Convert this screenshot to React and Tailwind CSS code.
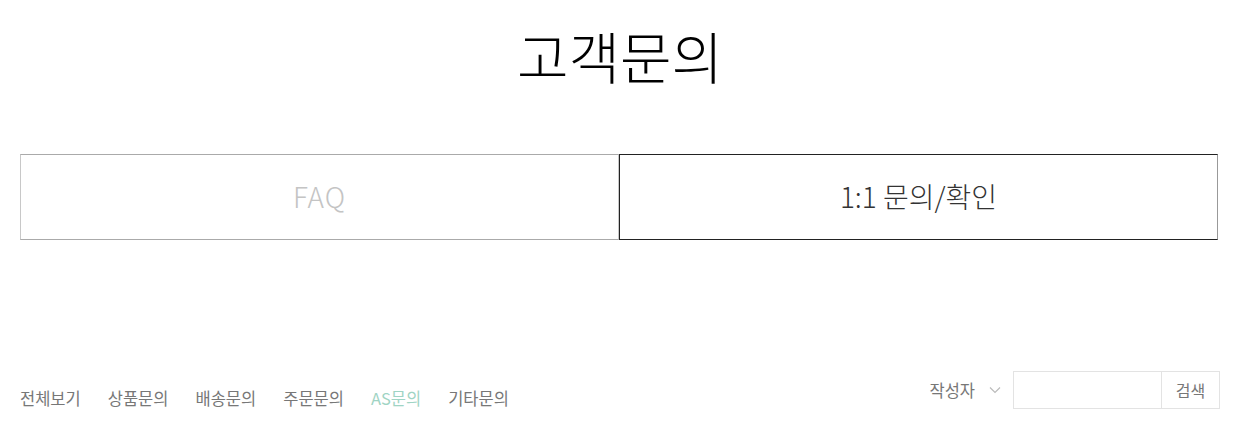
import React from 'react';

const cats = ['전체보기', '상품문의', '배송문의', '주문문의', 'AS문의', '기타문의'];

export default function App() {
    return (
        <div className="w-[1244px] h-[439px] bg-white font-['Noto_Sans_CJK_KR','Noto_Sans',sans-serif]">
            <div className="ml-[20px] w-[1200px]">
                {/* Title */}
                <h2 className="pt-[17px] text-center text-[56px] font-light leading-[76px] text-black">
                    고객문의
                </h2>

                {/* Tabs */}
                <div className="mt-[61px] flex">
                    <a className="flex h-[86px] w-[599px] items-center justify-center border border-[#c8c8c8] border-y-[#aaaaaa] pb-[3px] text-[28px] font-light tracking-[1px] text-[#c4c4c4]">
                        FAQ
                    </a>
                    <a className="flex h-[86px] w-[599px] items-center justify-center border border-[#222] border-r-[#999] pb-[3px] text-[28px] font-light text-[#333]">
                        1:1 문의/확인
                    </a>
                </div>

                {/* Filter row */}
                <div className="mt-[131px] flex items-start justify-between">
                    <ul className="flex gap-[27px] pt-[16px] text-[16.5px] leading-[22px] text-[#777]">
                        {cats.map((c) => (
                            <li key={c} className={c === 'AS문의' ? 'text-[#9fd4c4]' : ''}>
                                {c}
                            </li>
                        ))}
                    </ul>
                    <div className="flex items-center">
                        <span className="text-[16.5px] leading-[22px] text-[#777]">작성자</span>
                        <svg className="ml-[14px] mr-[12px]" width="12" height="8" viewBox="0 0 12 8" fill="none">
                            <path d="M1 1.5 L6 6.5 L11 1.5" stroke="#bbb" strokeWidth="1.2" />
                        </svg>
                        <div className="flex h-[38px] border border-[#e3e3e3]">
                            <input className="h-full w-[148px] border-r border-[#e3e3e3] px-2 text-[14px] outline-none" />
                            <button className="h-full w-[57px] text-[16px] text-[#777]">검색</button>
                        </div>
                    </div>
                </div>
            </div>
        </div>
    );
}
